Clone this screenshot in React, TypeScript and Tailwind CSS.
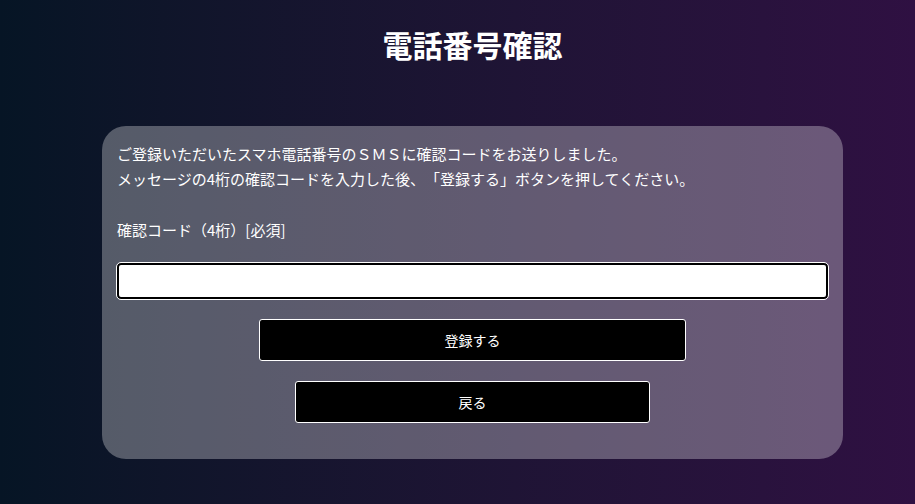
export default function App() {
  return (
    <div
      className="min-h-[504px] w-full bg-gradient-to-r from-[#061525] to-[#2f1042] pl-[30px] pt-[23px] pb-[45px] text-white [text-spacing-trim:space-all]"
      style={{ fontFamily: '"Noto Sans CJK JP", "Noto Sans", sans-serif' }}
    >
      <h1 className="text-center text-[30px] font-bold leading-[42px]">電話番号確認</h1>

      <div className="mx-auto mt-[61px] w-[741px] rounded-[24px] bg-white/30 px-[15px] pt-[15px] pb-[36px]">
        <p className="text-[15px] leading-[25px]">
          ご登録いただいたスマホ電話番号のＳＭＳに確認コードをお送りしました。
          <br />
          メッセージの4桁の確認コードを入力した後、「登録する」ボタンを押してください。
        </p>

        <label className="mt-[26px] block text-[15px] leading-[25px]">確認コード（4桁）[必須]</label>
        <input
          type="text"
          className="mt-[21px] block h-[36px] w-full rounded-[4px] border-2 border-black bg-white px-2 text-black outline outline-1 outline-white"
        />

        <div className="mt-[20px] flex flex-col items-center gap-[20px]">
          <button className="h-[42px] w-[60%] rounded-[3px] border border-white bg-black text-[14px] text-white">
            登録する
          </button>
          <button className="h-[42px] w-[50%] rounded-[3px] border border-white bg-black text-[14px] text-white">
            戻る
          </button>
        </div>
      </div>
    </div>
  );
}
